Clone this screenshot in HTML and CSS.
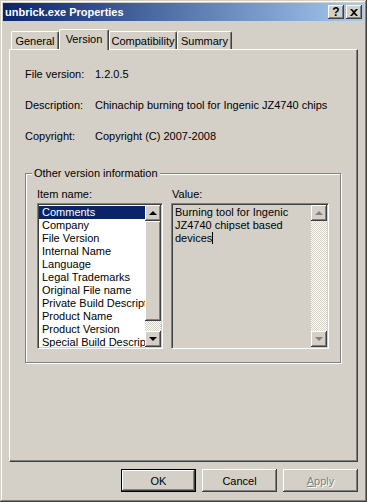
FILE: index.html
```html
<!DOCTYPE html>
<html lang="en">
<head>
    <meta charset="UTF-8">
    <title>unbrick.exe Properties</title>
    <link rel="stylesheet" href="styles.css">
</head>
<body>
    <div class="window">
        <div class="titlebar">
            <span class="title">unbrick.exe Properties</span>
            <div class="title-buttons">
                <button class="cap-btn help">?</button>
                <button class="cap-btn">
                    <svg width="8" height="7" viewBox="0 0 8 7"><path d="M0 0h2l2 2 2-2h2L5 3.5 8 7H6L4 5 2 7H0l3-3.5z" fill="#000"/></svg>
                </button>
            </div>
        </div>

        <div class="content">
            <div class="tabs">
                <div class="tab tab-general">General</div>
                <div class="tab tab-version selected">Version</div>
                <div class="tab tab-compat">Compatibility</div>
                <div class="tab tab-summary">Summary</div>
            </div>

            <div class="panel">
                <div class="info-row">
                    <span class="info-label">File version:</span>
                    <span>1.2.0.5</span>
                </div>
                <div class="info-row">
                    <span class="info-label">Description:</span>
                    <span>Chinachip burning tool for Ingenic JZ4740 chips</span>
                </div>
                <div class="info-row">
                    <span class="info-label">Copyright:</span>
                    <span>Copyright (C) 2007-2008</span>
                </div>

                <fieldset class="group">
                    <legend>Other version information</legend>
                    <div class="group-body">
                        <div class="column">
                            <div class="field-label">Item name:</div>
                            <div class="sunken listbox">
                                <ul class="items">
                                    <li class="active">Comments</li>
                                    <li>Company</li>
                                    <li>File Version</li>
                                    <li>Internal Name</li>
                                    <li>Language</li>
                                    <li>Legal Trademarks</li>
                                    <li>Original File name</li>
                                    <li>Private Build Description</li>
                                    <li>Product Name</li>
                                    <li>Product Version</li>
                                    <li>Special Build Description</li>
                                </ul>
                                <div class="scrollbar">
                                    <div class="arrow-btn"><span class="tri up"></span></div>
                                    <div class="thumb"></div>
                                    <div class="track"></div>
                                    <div class="arrow-btn"><span class="tri down"></span></div>
                                </div>
                            </div>
                        </div>
                        <div class="column">
                            <div class="field-label value-label">Value:</div>
                            <div class="sunken valuebox">
                                <div class="value-text">Burning tool for Ingenic<br>JZ4740 chipset based<br>devices<span class="caret"></span></div>
                                <div class="scrollbar">
                                    <div class="arrow-btn disabled"><span class="tri up"></span></div>
                                    <div class="track"></div>
                                    <div class="arrow-btn disabled"><span class="tri down"></span></div>
                                </div>
                            </div>
                        </div>
                    </div>
                </fieldset>
            </div>

            <div class="buttons">
                <button class="btn default">OK</button>
                <button class="btn">Cancel</button>
                <button class="btn disabled"><u>A</u>pply</button>
            </div>
        </div>
    </div>
</body>
</html>
```
FILE: styles.css
```css
body {
    margin: 0;
    font-family: "Liberation Sans", Arial, sans-serif;
    font-size: 11px;
    color: #000;
    background-color: #d4d0c8;
}

.window {
    width: 367px;
    height: 502px;
    box-sizing: border-box;
    padding: 3px;
    background-color: #d4d0c8;
    box-shadow: inset -1px -1px #404040, inset 1px 1px #d4d0c8, inset -2px -2px #808080, inset 2px 2px #fff;
}

.titlebar {
    height: 18px;
    display: flex;
    align-items: center;
    justify-content: space-between;
    padding: 0 2px;
    background: linear-gradient(to right, #0a246a, #a6caf0);
}

.title {
    color: white;
    font-weight: bold;
}

.title-buttons {
    display: flex;
    gap: 2px;
}

.cap-btn {
    width: 16px;
    height: 14px;
    padding: 0;
    border: none;
    background-color: #d4d0c8;
    box-shadow: inset -1px -1px #404040, inset 1px 1px #fff, inset -2px -2px #808080;
    display: flex;
    align-items: center;
    justify-content: center;
    font-family: "Liberation Sans", Arial, sans-serif;
}

.cap-btn.help {
    font-size: 12px;
    font-weight: bold;
    line-height: 14px;
}

.content {
    padding: 0 6px;
}

.tabs {
    display: flex;
    align-items: flex-end;
    height: 20px;
    margin-top: 8px;
    padding-left: 2px;
}

.tab {
    height: 18px;
    box-sizing: border-box;
    border-top: 1px solid #fff;
    border-left: 1px solid #fff;
    border-right: 1px solid #404040;
    border-radius: 2px 2px 0 0;
    box-shadow: inset -1px 0 #808080;
    text-align: center;
    line-height: 17px;
    padding-top: 1px;
}

.tab-general { width: 48px; }
.tab-version { width: 50px; }
.tab-compat { width: 68px; }
.tab-summary { width: 55px; }

.tab.selected {
    height: 21px;
    margin-bottom: -1px;
    padding-top: 0;
    line-height: 18px;
    background-color: #d4d0c8;
    position: relative;
    z-index: 1;
}

.panel {
    height: 413px;
    box-sizing: border-box;
    border-top: 1px solid #fff;
    border-left: 1px solid #fff;
    border-right: 1px solid #404040;
    border-bottom: 1px solid #404040;
    box-shadow: inset -1px -1px #808080;
    padding: 18px 0 0 15px;
}

.info-row {
    display: flex;
    height: 13px;
    line-height: 13px;
    margin-bottom: 18px;
}

.info-label {
    width: 70px;
}

.group {
    margin: 24px 0 0 0;
    width: 316px;
    box-sizing: border-box;
    padding: 0;
    border: 1px solid #808080;
    box-shadow: inset 1px 1px #fff, 1px 1px #fff;
    min-width: 0;
}

.group legend {
    margin-left: 6px;
    padding: 0 2px;
    line-height: 13px;
    background-color: #d4d0c8;
}

.group-body {
    display: flex;
    gap: 8px;
    padding: 8px 0 13px 11px;
}

.field-label {
    height: 13px;
    line-height: 13px;
    margin-bottom: 2px;
}

.value-label {
    padding-left: 1px;
}

.sunken {
    box-sizing: border-box;
    height: 146px;
    display: flex;
    border-top: 1px solid #808080;
    border-left: 1px solid #808080;
    border-right: 1px solid #fff;
    border-bottom: 1px solid #fff;
    box-shadow: inset 1px 1px #404040, inset -1px -1px #d4d0c8;
    padding: 1px;
}

.listbox {
    width: 126px;
    background-color: white;
}

.valuebox {
    width: 158px;
    background-color: #d4d0c8;
}

.items {
    list-style: none;
    margin: 0;
    padding: 1px 0 0 0;
    flex: 1;
    min-width: 0;
    overflow: hidden;
}

.items li {
    height: 13px;
    line-height: 13px;
    padding-left: 3px;
    white-space: nowrap;
    overflow: hidden;
}

.items li.active {
    background-color: #0a246a;
    color: white;
}

.value-text {
    flex: 1;
    padding: 1px 0 0 2px;
    line-height: 13px;
}

.caret {
    display: inline-block;
    width: 1px;
    height: 12px;
    background-color: #000;
    vertical-align: -2px;
}

.scrollbar {
    width: 16px;
    display: flex;
    flex-direction: column;
}

.arrow-btn {
    height: 16px;
    flex-shrink: 0;
    background-color: #d4d0c8;
    box-shadow: inset -1px -1px #404040, inset 1px 1px #fff, inset -2px -2px #808080;
    display: flex;
    align-items: center;
    justify-content: center;
}

.thumb {
    height: 100px;
    flex-shrink: 0;
    background-color: #d4d0c8;
    box-shadow: inset -1px -1px #404040, inset 1px 1px #fff, inset -2px -2px #808080;
}

.track {
    flex: 1;
    background: repeating-conic-gradient(#fff 0 25%, #d4d0c8 0 50%) 0 0 / 2px 2px;
}

.tri {
    width: 0;
    height: 0;
    border-left: 4px solid transparent;
    border-right: 4px solid transparent;
}

.tri.up {
    border-bottom: 4px solid #000;
    margin-top: -1px;
}

.tri.down {
    border-top: 4px solid #000;
}

.arrow-btn.disabled .tri.up {
    border-bottom-color: #808080;
}

.arrow-btn.disabled .tri.down {
    border-top-color: #808080;
}

.buttons {
    display: flex;
    justify-content: flex-end;
    gap: 6px;
    margin-top: 7px;
}

.btn {
    width: 75px;
    height: 23px;
    padding: 0;
    border: none;
    background-color: #d4d0c8;
    box-shadow: inset -1px -1px #404040, inset 1px 1px #fff, inset -2px -2px #808080;
    font-family: "Liberation Sans", Arial, sans-serif;
    font-size: 11px;
    color: #000;
}

.btn.default {
    box-shadow: inset 0 0 0 1px #000, inset -2px -2px #404040, inset 2px 2px #fff, inset -3px -3px #808080;
}

.btn.disabled {
    color: #808080;
    text-shadow: 1px 1px #fff;
}

.btn.disabled u {
    text-decoration-color: #808080;
}
```
